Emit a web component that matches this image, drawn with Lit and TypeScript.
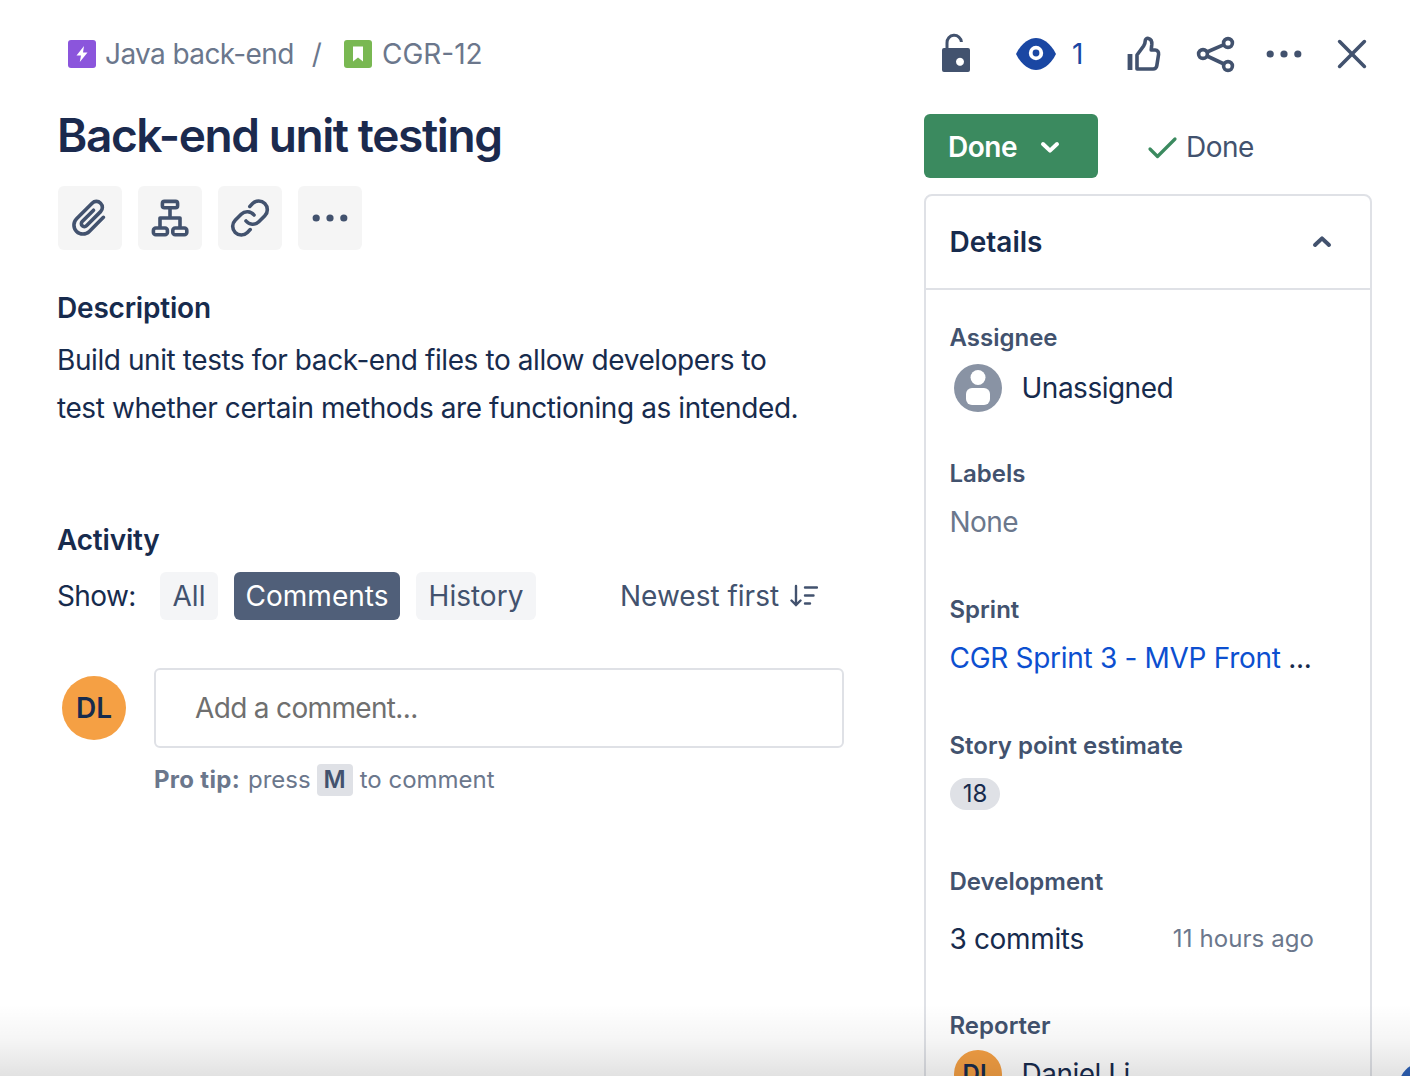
import { LitElement, html, css, svg } from "lit";
import { customElement } from "lit/decorators.js";

const icon = (body: unknown, cls = "") => html`<svg class="ic ${cls}" viewBox="0 0 24 24" width="48" height="48" fill="none" stroke="currentColor" stroke-width="1.8" stroke-linecap="round" stroke-linejoin="round">${body}</svg>`;

const clip = svg`<path transform="rotate(45 12 12)" d="M16.500 7V17a4.500 4.500 0 0 1-9 0V6a3 3 0 0 1 6 0V16a1.500 1.500 0 0 1-3 0V8"/>`;
const tree = svg`<rect x="8.200" y="3.700" width="7.600" height="3.200" rx="1"/><rect x="3.700" y="17" width="7" height="3.400" rx="1.200"/><rect x="13.400" y="17" width="7" height="3.400" rx="1.200"/><path d="M12 7v5M7 17v-5h10v5" stroke-linecap="butt"/>`;
const link = svg`<path d="M10 13.500a4.300 4.300 0 0 0 6.400.4l3-3a4.300 4.300 0 0 0-6.100-6.100l-1.400 1.400"/><path d="M14 10.500a4.300 4.300 0 0 0-6.400-.4l-3 3a4.300 4.300 0 0 0 6.100 6.100l1.400-1.400"/>`;
const dots = svg`<g fill="currentColor" stroke="none"><circle cx="5.100" cy="12" r="1.800"/><circle cx="12" cy="12" r="1.800"/><circle cx="18.900" cy="12" r="1.800"/></g>`;
const lock = svg`<path d="M7.500 9V6.500a3.600 3.600 0 0 1 7.200-.5" stroke-width="1.500" stroke-linecap="butt"/><path fill-rule="evenodd" fill="currentColor" stroke="none" d="M6 9h12a1 1 0 0 1 1 1v10a1 1 0 0 1-1 1H6a1 1 0 0 1-1-1V10a1 1 0 0 1 1-1zm6 6.900a2 2 0 1 0 0-.01z"/>`;
const eye = svg`<path fill="currentColor" stroke="none" d="M2 12C5 6 9 4 12 4s7 2 10 8c-3 6-7 8-10 8s-7-2-10-8z"/><circle cx="12" cy="11.500" r="3.600" fill="#fff" stroke="none"/><circle cx="12" cy="11.500" r="1.700" fill="currentColor" stroke="none"/>`;
const thumb = svg`<path d="M8.500 19.500V12.500L11.800 8c.6-.9.8-1.600.8-2.500 0-.9.8-1.500 1.600-1.300 1.200.3 1.800 1.600 1.700 3l-.3 2.800h2c1.100 0 1.900 1 1.700 2.100l-.9 5.800c-.1.900-.9 1.600-1.800 1.600z"/><path d="M5 12v8" stroke-width="2.400" stroke-linecap="butt"/>`;
const share = svg`<circle cx="18" cy="6.500" r="2.200"/><circle cx="5.500" cy="12" r="2.200"/><circle cx="18" cy="18" r="2.200"/><path d="M7.500 11l8.500-3.700M7.500 13l8.500 4" stroke-linecap="butt"/>`;
const close = svg`<path d="M5.800 5.800l12.400 12.400M18.200 5.800L5.800 18.200"/>`;

@customElement("app-root")
export class AppRoot extends LitElement {
  static styles = css`
    :host { display: block; position: relative; width: 1410px; height: 1076px; overflow: hidden; background: #fff; color: #172b4d; font-family: Inter, "Liberation Sans", sans-serif; font-size: 28px; line-height: 48px; }
    * { box-sizing: border-box; }
    h1, h2, h3, p { margin: 0; }
    button { font: inherit; border: 0; padding: 0; color: inherit; }
    .page { display: flex; height: 100%; }
    .ic { display: block; flex: none; }

    .left { width: 844px; margin-left: 57px; flex: none; }
    .crumbs { display: flex; align-items: center; height: 28px; margin-top: 40px; margin-left: 11px; color: #6b778c; }
    .tile { width: 28px; height: 28px; border-radius: 3px; display: flex; align-items: center; justify-content: center; flex: none; }
    .tile.epic { background: #8b55dc; }
    .tile.story { background: #79b852; }
    .crumb-text { margin-left: 9px; }
    .crumb-text.key { margin-left: 10px; }
    .project { letter-spacing: -0.6px; }
    .sep { margin: 0 22px 0 18px; }
    h1 { font-size: 46px; font-weight: 600; line-height: 64px; letter-spacing: -1.4px; margin-top: 35px; color: #1b2a4e; }
    .tools { display: flex; gap: 16px; margin-top: 19px; margin-left: 1px; }
    .tool { width: 64px; height: 64px; border-radius: 6px; background: #f5f5f5; color: #42526e; display: flex; align-items: center; justify-content: center; }
    h2 { font-size: 28px; font-weight: 600; line-height: 40px; color: #172b4d; letter-spacing: -0.2px; }
    .desc-h { margin-top: 38px; }
    .desc { margin-top: 8px; line-height: 48px; width: 745px; letter-spacing: -0.42px; }
    .act-h { margin-top: 88px; }
    .show { display: flex; align-items: center; height: 48px; margin-top: 12px; }
    .show-l { width: 103px; letter-spacing: -0.6px; }
    .pill { height: 48px; border-radius: 6px; background: #f4f5f7; color: #42526e; margin-right: 16px; text-align: center; }
    .pill.all { width: 58px; }
    .pill.com { width: 166px; }
    .pill.hist { width: 120px; }
    .pill.on { background: #505f79; color: #fff; }
    .sort { display: flex; align-items: center; margin-left: 68px; color: #42526e; }
    .sort svg { margin-left: 11px; }
    .comment { display: flex; align-items: flex-start; margin-top: 48px; }
    .av { border-radius: 50%; background: #f5a044; color: #172b4d; font-weight: 600; display: flex; align-items: center; justify-content: center; flex: none; }
    .av.me { width: 64px; height: 64px; margin: 8px 28px 0 5px; }
    .input { width: 690px; height: 80px; border: 2px solid #dfe1e6; border-radius: 6px; color: #6f6f6f; padding: 0 39px; display: flex; align-items: center; letter-spacing: -0.66px; }
    .tip { display: flex; align-items: center; height: 32px; margin: 16px 0 0 97px; font-size: 24px; color: #6b778c; }
    .tip b { font-weight: 700; margin-right: 8px; letter-spacing: 0.3px; }
    kbd { font: inherit; font-weight: 600; width: 36px; height: 32px; background: #dfe1e6; color: #42526e; border-radius: 4px; display: flex; align-items: center; justify-content: center; margin: 0 7px 0 6px; }

    .right { width: 448px; margin-left: 23px; flex: none; }
    .top { display: flex; align-items: center; height: 48px; margin-top: 30px; color: #42526e; }
    .slot { display: block; flex: none; }
    .lock { margin-left: 8px; }
    .eye { margin-left: 32px; color: #1a47a3; }
    .count { color: #1a47a3; width: 14px; flex: none; margin-left: 12px; }
    .thumb { margin-left: 34px; }
    .share { margin-left: 24px; }
    .more { margin-left: 20px; }
    .close { margin-left: 20px; }
    .status { display: flex; align-items: center; margin-top: 36px; height: 64px; }
    .done-btn { width: 174px; height: 64px; background: #3b8a5f; color: #fff; font-weight: 600; border-radius: 6px; display: flex; align-items: center; padding: 2px 0 0 24px; letter-spacing: -0.5px; }
    .done-btn svg { margin-left: 9px; }
    .res { display: flex; align-items: center; margin-left: 47px; padding-top: 2px; color: #42526e; letter-spacing: -0.5px; }
    .res svg { margin-right: 5px; color: #3b8a5f; }
    .panel { margin-top: 16px; border: 2px solid #dfe1e6; border-radius: 8px; height: 1000px; }
    .panel-h { display: flex; align-items: center; justify-content: space-between; height: 94px; padding: 0 23.5px; border-bottom: 2px solid #dfe1e6; }
    .panel-h h2 { letter-spacing: 0; }
    .panel-h svg { color: #42526e; margin-right: 0.5px; }
    .field { height: 136px; padding: 0 23.5px; }
    .fields { padding-top: 30px; }
    h3 { font-size: 24px; font-weight: 600; line-height: 36px; color: #42526e; }
    .who { display: flex; align-items: center; margin: 8px 0 0 4.5px; height: 48px; }
    .who.reporter { margin-top: 6px; }
    .who .name { margin-left: 19.5px; letter-spacing: -0.5px; }
    .av.small { width: 48px; height: 48px; font-size: 24px; }
    .val { margin-top: 6px; }
    .muted { color: #6b778c; letter-spacing: -0.6px; }
    a { color: #0c4fd0; text-decoration: none; display: block; width: 100%; white-space: nowrap; letter-spacing: -0.3px; }
    a span { color: #172b4d; }
    .chip { display: inline-flex; align-items: center; justify-content: center; width: 50px; height: 32px; margin: 14px 0 0 0.5px; border-radius: 16px; background: #dfe1e6; font-size: 24px; vertical-align: top; }
    .dev { display: flex; align-items: center; margin-top: 15px; letter-spacing: -0.35px; }
    .ago { margin-left: 89px; font-size: 24px; color: #6b778c; letter-spacing: 0.1px; }
    .field.dev-f { height: 144px; }

    .corner { position: absolute; right: -35px; bottom: -33px; width: 46px; height: 46px; border-radius: 50%; background: #2e62b8; }
    .fade { position: absolute; left: 0; right: 0; bottom: 0; height: 72px; background: linear-gradient(to bottom, rgba(0,0,0,0), rgba(0,0,0,0.04) 50%, rgba(0,0,0,0.115)); pointer-events: none; }
  `;

  render() {
    return html`
      <div class="page">
        <main class="left">
          <nav class="crumbs">
            <span class="tile epic"><svg width="16" height="20" viewBox="0 0 16 20"><path fill="#fff" d="M10 2L2.500 11.500H7L5.800 18 13.500 8.500H9z"/></svg></span>
            <span class="crumb-text project">Java back-end</span>
            <span class="sep">/</span>
            <span class="tile story"><svg width="14" height="18" viewBox="0 0 14 18"><path fill="#fff" d="M2 1.500h10v15l-5-4-5 4z"/></svg></span>
            <span class="crumb-text key">CGR-12</span>
          </nav>
          <h1>Back-end unit testing</h1>
          <div class="tools">
            <button class="tool">${icon(clip)}</button>
            <button class="tool">${icon(tree)}</button>
            <button class="tool">${icon(link)}</button>
            <button class="tool">${icon(dots)}</button>
          </div>
          <h2 class="desc-h">Description</h2>
          <p class="desc">Build unit tests for back-end files to allow developers to test whether certain methods are functioning as intended.</p>
          <h2 class="act-h">Activity</h2>
          <div class="show">
            <span class="show-l">Show:</span>
            <button class="pill all">All</button>
            <button class="pill com on">Comments</button>
            <button class="pill hist">History</button>
            <span class="sort">Newest first
              <svg width="28" height="24" viewBox="0 0 28 24" fill="none" stroke="currentColor" stroke-width="2.400" stroke-linecap="round"><path d="M6 2v19M1.500 16.500L6 21l4.500-4.500M15 3.500h12M15 11.500h8.500M15 19.500h5"/></svg>
            </span>
          </div>
          <div class="comment">
            <div class="av me">DL</div>
            <div class="input">Add a comment...</div>
          </div>
          <div class="tip"><b>Pro tip:</b> press <kbd>M</kbd> to comment</div>
        </main>

        <aside class="right">
          <div class="top">
            <span class="slot lock">${icon(lock)}</span>
            <span class="slot eye">${icon(eye)}</span>
            <span class="count">1</span>
            <span class="slot thumb">${icon(thumb)}</span>
            <span class="slot share">${icon(share)}</span>
            <span class="slot more">${icon(dots)}</span>
            <span class="slot close">${icon(close)}</span>
          </div>
          <div class="status">
            <button class="done-btn">Done
              <svg width="48" height="48" viewBox="0 0 24 24" fill="none" stroke="#fff" stroke-width="2" stroke-linecap="round" stroke-linejoin="round"><path d="M8.500 10.500L12 13.800l3.500-3.300"/></svg>
            </button>
            <span class="res">
              <svg width="36" height="36" viewBox="0 0 36 36" fill="none" stroke="currentColor" stroke-width="3.200" stroke-linecap="round" stroke-linejoin="round"><path d="M5 20l7.500 7.500L30 10"/></svg>
              Done
            </span>
          </div>
          <section class="panel">
            <div class="panel-h">
              <h2>Details</h2>
              <svg width="48" height="48" viewBox="0 0 24 24" fill="none" stroke="currentColor" stroke-width="2" stroke-linecap="round" stroke-linejoin="round"><path d="M8.500 13.500L12 10.200l3.500 3.300"/></svg>
            </div>
            <div class="fields">
              <div class="field">
                <h3>Assignee</h3>
                <div class="who">
                  <svg width="48" height="48" viewBox="0 0 48 48"><circle cx="24" cy="24" r="24" fill="#8993a4"/><circle cx="24" cy="13.500" r="7.500" fill="#fff"/><rect x="12" y="24" width="24" height="17" rx="6" fill="#fff"/></svg>
                  <span class="name">Unassigned</span>
                </div>
              </div>
              <div class="field"><h3>Labels</h3><div class="val muted">None</div></div>
              <div class="field"><h3>Sprint</h3><div class="val"><a href="#">CGR Sprint 3 - MVP Front <span>...</span></a></div></div>
              <div class="field"><h3>Story point estimate</h3><span class="chip">18</span></div>
              <div class="field dev-f"><h3>Development</h3><div class="dev"><span>3 commits</span><span class="ago">11 hours ago</span></div></div>
              <div class="field">
                <h3>Reporter</h3>
                <div class="who reporter"><div class="av small">DL</div><span class="name">Daniel Li</span></div>
              </div>
            </div>
          </section>
        </aside>
      </div>
      <div class="corner"></div>
      <div class="fade"></div>
    `;
  }
}
